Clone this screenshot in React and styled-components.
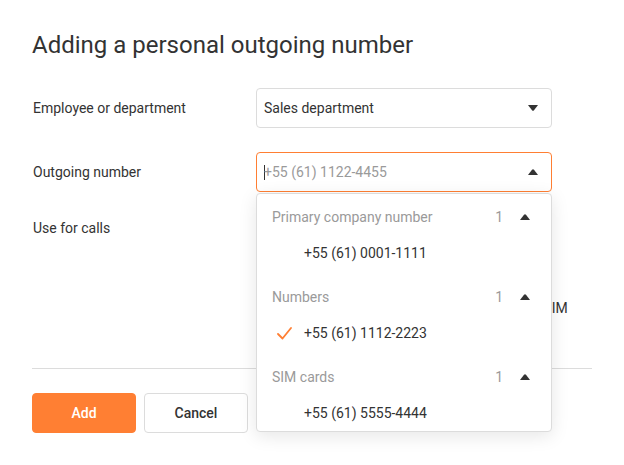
import React from "react";
import styled, { createGlobalStyle } from "styled-components";

const Global = createGlobalStyle`
  html, body { margin: 0; padding: 0; background: #fff; }
  body { font-family: Roboto, "Noto Sans", Arial, sans-serif; color: #333; }
  * { box-sizing: border-box; }
`;

const Page = styled.div`
  width: 624px;
  height: 465px;
  padding: 29px 32px 0 33px;
  overflow: hidden;
`;

const Title = styled.h1`
  margin: 0 0 27px -1px;
  font-size: 24px;
  line-height: 32px;
  font-weight: 400;
  color: #333;
`;

const Form = styled.div`
  display: flex;
  flex-direction: column;
  gap: 24px;
`;

const Row = styled.div`
  display: grid;
  grid-template-columns: 223px 296px;
  align-items: ${(p) => (p.$top ? "start" : "center")};
`;

const Label = styled.div`
  font-size: 14px;
  line-height: 24px;
  color: #333;
`;

const Field = styled.div`
  position: relative;
`;

const Select = styled.div`
  height: 40px;
  border: 1px solid ${(p) => (p.$open ? "#ff7f33" : "#dcdcdc")};
  border-radius: 4px;
  display: flex;
  align-items: center;
  padding: 0 13px 0 7px;
  font-size: 14px;
  color: ${(p) => (p.$placeholder ? "#9a9a9a" : "#333")};
  background: #fff;
`;

const Value = styled.span`
  flex: 1;
  display: flex;
  align-items: center;
`;

const Cursor = styled.span`
  display: inline-block;
  width: 1px;
  height: 15px;
  background: #333;
  margin-right: -1px;
`;

const Caret = ({ up, color = "#333" }) => (
  <svg width="10" height="6" viewBox="0 0 10 6" style={{ display: "block" }}>
    {up ? (
      <path d="M0 6 L4 0.8 Q5 -0.3 6 0.8 L10 6 Z" fill={color} />
    ) : (
      <path d="M0 0 L4 5.2 Q5 6.3 6 5.2 L10 0 Z" fill={color} />
    )}
  </svg>
);

const Menu = styled.div`
  position: absolute;
  top: 41px;
  left: 0;
  width: 296px;
  background: #fff;
  border: 1px solid #dcdcdc;
  border-radius: 4px;
  box-shadow: 0 4px 18px rgba(0, 0, 0, 0.1);
  padding: 5px 0 0;
  z-index: 5;
`;

const Group = styled.div`
  & + & {
    margin-top: 8px;
  }
`;

const GroupHead = styled.div`
  height: 36px;
  display: flex;
  align-items: center;
  padding: 0 21px 0 15px;
  font-size: 14px;
  color: #9a9a9a;
`;

const GroupName = styled.span`
  flex: 1;
`;

const Count = styled.span`
  margin-right: 17px;
`;

const Item = styled.div`
  height: 36px;
  display: flex;
  align-items: center;
  padding-left: 20px;
  font-size: 14px;
  color: #333;
`;

const CheckSlot = styled.span`
  width: 27px;
  display: flex;
  align-items: center;
`;

const Check = () => (
  <svg width="15" height="13" viewBox="0 0 15 13" style={{ display: "block" }}>
    <path d="M1 7 L5.5 11.5 L14 1" fill="none" stroke="#ff7f33" strokeWidth="1.8" strokeLinecap="round" strokeLinejoin="round" />
  </svg>
);

const Options = styled.div`
  display: flex;
  flex-direction: column;
  gap: 16px;
  padding-bottom: 24px;
  white-space: nowrap;
`;

const Option = styled.div`
  display: flex;
  align-items: center;
  gap: 15px;
  font-size: 14px;
  line-height: 24px;
  color: #333;
`;

const Radio = styled.span`
  width: 16px;
  height: 16px;
  border-radius: 50%;
  border: 1px solid #ccc;
`;

const Divider = styled.div`
  height: 1px;
  background: #dcdcdc;
  margin: 24px 0 24px -1px;
`;

const Footer = styled.div`
  display: flex;
  gap: 8px;
  margin-left: -1px;
`;

const Button = styled.button`
  width: 104px;
  height: 40px;
  border-radius: 4px;
  font-family: Roboto, Arial, sans-serif;
  font-size: 14px;
  font-weight: 500;
  cursor: pointer;
  border: 1px solid ${(p) => (p.$primary ? "#ff7f33" : "#dcdcdc")};
  background: ${(p) => (p.$primary ? "#ff7f33" : "#fff")};
  color: ${(p) => (p.$primary ? "#fff" : "#333")};
`;

const groups = [
  { name: "Primary company number", count: 1, items: [{ n: "+55 (61) 0001-1111" }] },
  { name: "Numbers", count: 1, items: [{ n: "+55 (61) 1112-2223", checked: true }] },
  { name: "SIM cards", count: 1, items: [{ n: "+55 (61) 5555-4444" }] },
];

export default function App() {
  return (
    <Page>
      <Global />
      <Title>Adding a personal outgoing number</Title>
      <Form>
        <Row>
          <Label>Employee or department</Label>
          <Select>
            <Value>Sales department</Value>
            <Caret />
          </Select>
        </Row>
        <Row>
          <Label>Outgoing number</Label>
          <Field>
            <Select $open $placeholder>
              <Value>
                <Cursor />
                +55 (61) 1122-4455
              </Value>
              <Caret up />
            </Select>
            <Menu>
              {groups.map((g) => (
                <Group key={g.name}>
                  <GroupHead>
                    <GroupName>{g.name}</GroupName>
                    <Count>{g.count}</Count>
                    <Caret up />
                  </GroupHead>
                  {g.items.map((it) => (
                    <Item key={it.n}>
                      <CheckSlot>{it.checked && <Check />}</CheckSlot>
                      {it.n}
                    </Item>
                  ))}
                </Group>
              ))}
            </Menu>
          </Field>
        </Row>
        <Row $top>
          <Label>Use for calls</Label>
          <Options>
            <Option><Radio />All outgoing calls</Option>
            <Option><Radio />Calls from the mobile app</Option>
            <Option><Radio />For all calls from the mobile apps and from SIM</Option>
          </Options>
        </Row>
      </Form>
      <Divider />
      <Footer>
        <Button $primary>Add</Button>
        <Button>Cancel</Button>
      </Footer>
    </Page>
  );
}
